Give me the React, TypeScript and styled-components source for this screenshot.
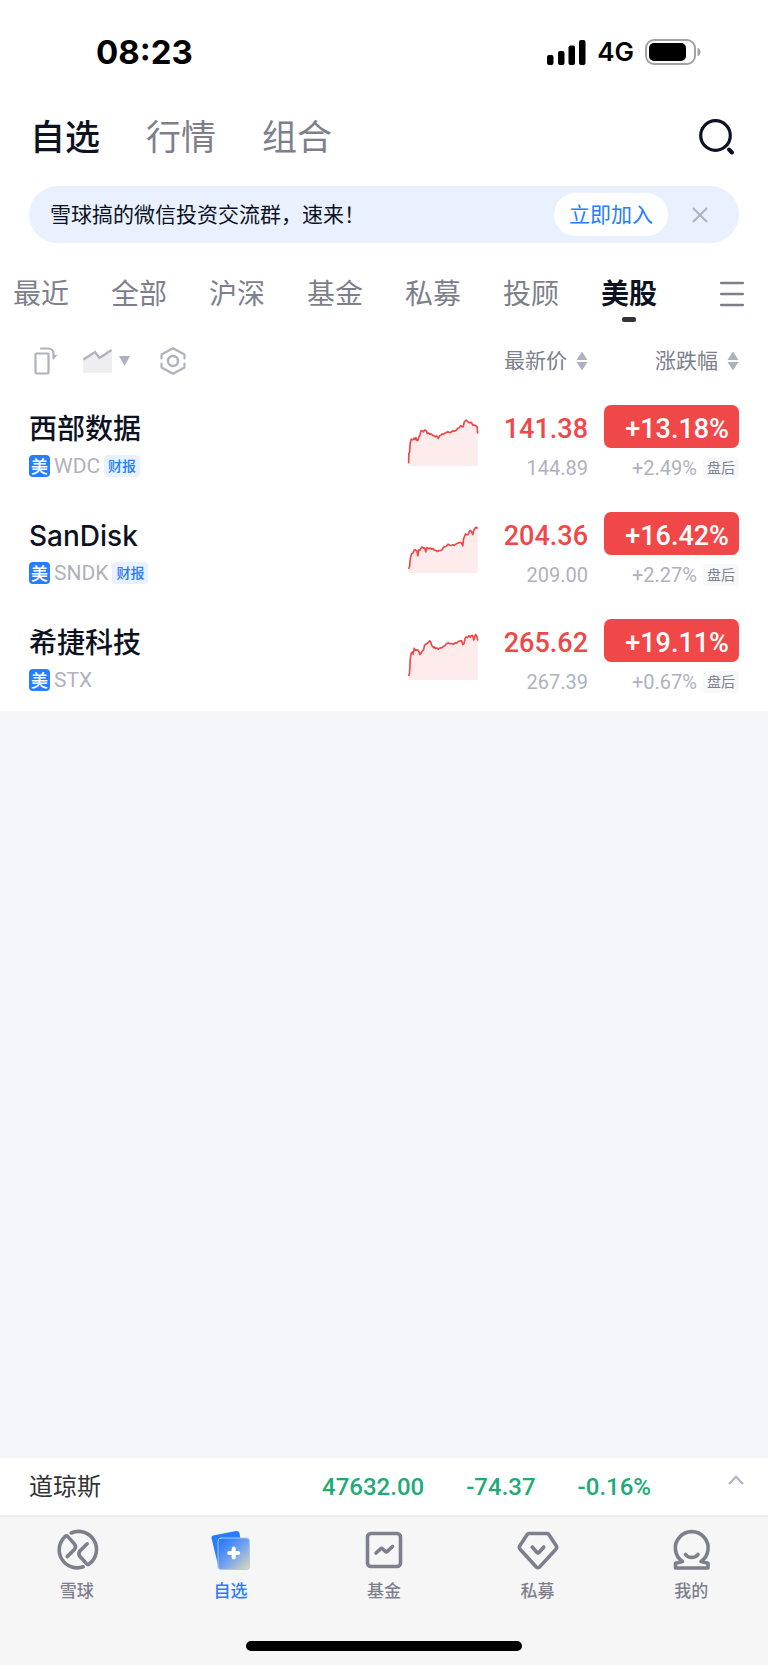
import React from 'react';
import styled, { createGlobalStyle } from 'styled-components';

const ink = '#0d1223';
const grey = '#7d808c';
const pale = '#afb1bf';
const red = '#f04848';
const green = '#1faa76';
const blue = '#267dff';
const numeric = `Roboto, "Noto Sans CJK SC", sans-serif`;

const GlobalStyle = createGlobalStyle`
  *, *::before, *::after { box-sizing: border-box; }
  body {
    margin: 0;
    background: #f3f5fa;
    color: ${ink};
    font-family: Inter, "Noto Sans CJK SC", sans-serif;
  }
  button {
    margin: 0;
    padding: 0;
    border: 0;
    background: none;
    color: inherit;
    font: inherit;
    cursor: pointer;
  }
  a { color: inherit; text-decoration: none; }
  svg { display: block; flex: none; overflow: visible; }
`;

const Page = styled.div`
  display: flex;
  flex-direction: column;
  min-height: 100vh;
`;

const TopPanel = styled.div`
  background: #fff;
`;

const StatusBar = styled.div`
  display: flex;
  align-items: center;
  justify-content: space-between;
  height: 104px;
  padding: 0 67px 0 96px;
  color: #000;
`;

const Clock = styled.span`
  font-size: 33px;
  font-weight: 700;
  line-height: 40px;
`;

const StatusIcons = styled.div`
  display: flex;
  align-items: center;
  gap: 11px;
  font-size: 26px;
  font-weight: 600;
  line-height: 32px;
`;

const Header = styled.header`
  display: flex;
  align-items: center;
  justify-content: space-between;
  height: 65px;
  padding: 0 33px 0 30px;
`;

const HeaderNav = styled.nav`
  display: flex;
  gap: 46px;
`;

const HeaderLink = styled.a<{ $active?: boolean }>`
  color: ${(p) => (p.$active ? ink : grey)};
  font-size: 35px;
  font-weight: ${(p) => (p.$active ? 500 : 400)};
  line-height: 48px;
`;

const Banner = styled.div`
  display: flex;
  align-items: center;
  height: 57px;
  margin: 17px 29px 0;
  padding: 0 31px 0 21px;
  border-radius: 29px;
  background: #e9f1fe;
  font-size: 21px;
  line-height: 30px;
`;

const BannerText = styled.p`
  flex: 1;
  margin: 0;
`;

const JoinButton = styled.button`
  height: 43px;
  margin-right: 24px;
  padding: 0 15px;
  border-radius: 22px;
  background: #fff;
  color: ${blue};
`;

const GroupBar = styled.div`
  display: flex;
  align-items: center;
  justify-content: space-between;
  padding: 24px 24px 11px 13px;
`;

const GroupTabs = styled.nav`
  display: flex;
  gap: 42px;
`;

const GroupTab = styled.a<{ $active?: boolean }>`
  position: relative;
  color: ${(p) => (p.$active ? ink : grey)};
  font-size: 28px;
  font-weight: ${(p) => (p.$active ? 700 : 400)};
  line-height: 54px;

  &::after {
    content: ${(p) => (p.$active ? '""' : 'none')};
    position: absolute;
    bottom: -1px;
    left: calc(50% - 7px);
    width: 14px;
    height: 5px;
    border-radius: 2px;
    background: #333;
  }
`;

const QuoteTable = styled.table`
  width: 100%;
  border-collapse: collapse;
  table-layout: fixed;
`;

const HeadCell = styled.th<{ $width?: number; $end?: number }>`
  width: ${(p) => (p.$width ? `${p.$width}px` : 'auto')};
  height: 58px;
  padding: 0 ${(p) => p.$end || 0}px 0 0;
  color: ${grey};
  font-size: 21px;
  font-weight: 400;
`;

const Tools = styled.div`
  display: flex;
  align-items: center;
  padding-left: 33px;
`;

const ToolButton = styled.button<{ $gap?: number }>`
  display: flex;
  align-items: center;
  gap: 7px;
  margin-right: ${(p) => p.$gap || 0}px;
`;

const SortButton = styled.button`
  display: flex;
  align-items: center;
  gap: 9px;
  margin-left: auto;
  line-height: 28px;
  white-space: nowrap;
`;

const Cell = styled.td<{ $end?: number }>`
  height: 107px;
  padding: 15px ${(p) => p.$end || 0}px 0 0;
  vertical-align: top;
`;

const Stock = styled.a`
  display: block;
  padding-left: 29px;
`;

const StockName = styled.span`
  display: block;
  font-size: 28px;
  font-weight: 500;
  line-height: 48px;
`;

const StockMeta = styled.span`
  display: flex;
  align-items: center;
  gap: 4px;
  height: 22px;
  margin-top: 2px;
`;

const Tag = styled.span<{ $kind: 'market' | 'report' | 'session' }>`
  flex: none;
  height: 22px;
  padding: 0 ${(p) => (p.$kind === 'market' ? 2 : 4)}px;
  border-radius: 4px;
  background: ${(p) =>
    ({ market: blue, report: '#e9f1fe', session: '#f7f8fa' })[p.$kind]};
  color: ${(p) => ({ market: '#fff', report: blue, session: grey })[p.$kind]};
  font-family: "Noto Sans CJK SC", sans-serif;
  font-size: ${(p) => (p.$kind === 'market' ? 17 : 14)}px;
  font-weight: ${(p) => (p.$kind === 'session' ? 400 : 500)};
  line-height: 21px;
`;

const Ticker = styled.span`
  color: ${pale};
  font-family: ${numeric};
  font-size: 21px;
  line-height: 22px;
`;

const Price = styled.div`
  color: ${red};
  font-family: ${numeric};
  font-size: 27px;
  font-weight: 500;
  line-height: 48px;
  text-align: right;
`;

const Change = styled.div`
  height: 43px;
  margin-left: 16px;
  padding-right: 10px;
  border-radius: 7px;
  background: ${red};
  color: #fff;
  font-family: ${numeric};
  font-size: 27px;
  font-weight: 500;
  line-height: 48px;
  text-align: right;
`;

const AfterHours = styled.div<{ $top: number }>`
  display: flex;
  align-items: center;
  justify-content: flex-end;
  gap: 6px;
  margin-top: ${(p) => p.$top}px;
  color: ${pale};
  font-family: ${numeric};
  font-size: 20px;
  line-height: 22px;
`;

const ChartBox = styled.div`
  padding: 14px 0 0 1px;
`;

const Spacer = styled.div`
  flex: 1;
`;

const IndexBar = styled.div`
  display: flex;
  align-items: center;
  height: 59px;
  padding: 0 24px 0 29px;
  border-bottom: 2px solid #ececf3;
  background: #fff;
  font-size: 24px;
  line-height: 34px;
`;

const IndexName = styled.span`
  flex: 1;
  color: #333;
`;

const IndexValues = styled.div`
  display: flex;
  gap: 42px;
  margin-right: 77px;
  color: ${green};
  font-family: ${numeric};
  font-weight: 500;
`;

const ExpandButton = styled.button`
  margin-bottom: 14px;
`;

const TabBar = styled.nav`
  display: grid;
  grid-template-columns: repeat(5, 1fr);
  padding-top: 12px;
  background: #f6f6f6;
`;

const TabItem = styled.a<{ $active?: boolean }>`
  display: flex;
  flex-direction: column;
  align-items: center;
  gap: 7px;
  color: ${(p) => (p.$active ? blue : grey)};
  font-size: 17px;
  font-weight: 500;
  line-height: 26px;
`;

const HomeArea = styled.div`
  display: flex;
  justify-content: center;
  padding: 37px 0 14px;
  background: #f6f6f6;
`;

const HomeBar = styled.div`
  width: 36%;
  height: 10px;
  border-radius: 5px;
  background: #000;
`;

type StockRow = {
  name: string;
  ticker: string;
  report?: boolean;
  price: string;
  change: string;
  afterPrice: string;
  afterChange: string;
  trend: string;
};

const stocks: StockRow[] = [
  {
    name: '西部数据',
    ticker: 'WDC',
    report: true,
    price: '141.38',
    change: '+13.18%',
    afterPrice: '144.89',
    afterChange: '+2.49%',
    trend:
      '55,220 56,190 58,186 60,158 63,147 68,149 71,144 74,148 77,142 80,151 83,150 87,138 89,136 92,123 96,121 100,125 104,119 109,122 111,130 116,128 119,132 124,131 128,136 132,136 135,140 140,137 145,145 149,136 153,135 156,131 160,132 166,128 172,125 182,127 188,122 193,123 200,119 203,114 207,113 213,106 217,110 220,109 223,96 229,89 233,93 237,97 245,96 249,105 254,104 259,107 262,110 264,130',
  },
  {
    name: 'SanDisk',
    ticker: 'SNDK',
    report: true,
    price: '204.36',
    change: '+16.42%',
    afterPrice: '209.00',
    afterChange: '+2.27%',
    trend:
      '55,216 58,209 60,186 64,170 68,168 72,159 76,158 80,161 83,176 86,158 90,158 95,149 100,153 103,152 107,164 110,151 115,154 120,153 124,156 129,154 133,159 138,160 142,163 147,160 152,160 156,158 160,151 165,149 170,146 174,141 180,144 184,145 189,143 193,144 199,140 205,137 210,136 215,137 219,146 221,125 224,118 227,110 231,113 236,110 239,101 243,100 246,106 249,112 252,99 255,93 260,90 264,93',
  },
  {
    name: '希捷科技',
    ticker: 'STX',
    price: '265.62',
    change: '+19.11%',
    afterPrice: '267.39',
    afterChange: '+0.67%',
    trend:
      '55,216 58,207 60,165 63,147 67,143 69,150 72,132 75,138 80,137 85,139 89,151 93,146 96,141 100,138 103,124 108,119 113,116 119,110 122,113 125,124 130,130 133,128 136,133 140,131 145,135 150,131 155,131 160,127 165,124 170,118 175,116 180,118 185,118 190,120 195,116 200,117 205,112 210,110 215,109 219,121 222,119 226,102 229,98 233,100 237,94 241,99 244,94 249,94 252,107 257,91 261,95 264,109',
  },
];

const Sparkline = ({ points }: { points: string }) => (
  <svg width="70" height="47" viewBox="54 86 210 142" aria-hidden="true">
    <polygon points={`55,228 ${points} 264,228`} fill="#feeced" />
    <polyline
      points={points}
      fill="none"
      stroke={red}
      strokeWidth="5"
      strokeLinejoin="round"
    />
  </svg>
);

const SortIcon = () => (
  <svg width="12" height="20" viewBox="0 0 12 20" fill={pale} aria-hidden="true">
    <path d="M6 0.500 11.500 9H0.500zM6 19.500 0.500 11H11.500z" />
  </svg>
);

const SignalIcon = () => (
  <svg width="39" height="25" viewBox="0 0 39 25" aria-hidden="true">
    <rect x="0" y="15" width="6.500" height="10" rx="2" />
    <rect x="11" y="11" width="6.500" height="14" rx="2" />
    <rect x="21.500" y="5.500" width="6.500" height="19.500" rx="2" />
    <rect x="32" y="0" width="6.500" height="25" rx="2" />
  </svg>
);

const BatteryIcon = () => (
  <svg width="56" height="26" viewBox="0 0 56 26" aria-hidden="true">
    <rect x="1" y="1" width="49" height="24" rx="8" fill="none" stroke="#a2a2a2" strokeWidth="2" />
    <rect x="4" y="4" width="37" height="18" rx="5" />
    <path d="M52.500 9c4 1 4 7 0 8z" fill="#a2a2a2" />
  </svg>
);

const SearchIcon = () => (
  <svg width="36" height="36" viewBox="0 0 36 36" fill="none" stroke={ink} strokeWidth="3.200">
    <circle cx="16.500" cy="16.500" r="14.800" />
    <path d="M30 30.500 33 33.500" strokeWidth="4" strokeLinecap="round" />
  </svg>
);

const CloseIcon = () => (
  <svg width="16" height="16" viewBox="0 0 16 16" fill="none" stroke={pale} strokeWidth="2">
    <path d="M1 1 15 15M15 1 1 15" />
  </svg>
);

const MenuIcon = () => (
  <svg width="24" height="26" viewBox="0 0 24 26" fill="none" stroke={grey} strokeWidth="2.500" strokeLinecap="round">
    <path d="M1.200 2H22.800M1.200 13H22.800M1.200 24H22.800" />
  </svg>
);

const RotateIcon = () => (
  <svg width="24" height="28" viewBox="0 0 24 28" fill="none" stroke={pale} strokeWidth="2.200" strokeLinejoin="round">
    <rect x="2.500" y="6.500" width="13" height="20" rx="1" />
    <path d="M8 1.500H15Q20.500 1.500 20.500 7V11" strokeLinecap="round" />
    <path d="M20 8H24.500L20 13z" fill={pale} stroke="none" />
  </svg>
);

const TrendIcon = () => (
  <svg width="29" height="24" viewBox="0 0 29 24" aria-hidden="true">
    <path d="M0 10.500 12 3 17 9 29 1V24H0z" fill="#eeeef1" />
    <path d="M0.500 10.500 12 3 16.500 9 28.500 1" fill="none" stroke={pale} strokeWidth="2.200" />
  </svg>
);

const CaretIcon = () => (
  <svg width="11" height="10" viewBox="0 0 11 10" fill={pale} aria-hidden="true">
    <path d="M0 0H11L5.500 10z" />
  </svg>
);

const SettingsIcon = () => (
  <svg width="26" height="28" viewBox="0 0 26 28" fill="none" stroke={pale} strokeWidth="2.200" strokeLinejoin="round" strokeLinecap="round">
    <path d="M1.500 11.500V8Q1.500 7.500 2 7.200L13 1.200 24 7.200Q24.500 7.500 24.500 8V11.500" />
    <path d="M1.500 16.500V20Q1.500 20.500 2 20.800L13 26.800 24 20.800Q24.500 20.500 24.500 20V16.500" />
    <circle cx="13" cy="14" r="5" strokeWidth="2.500" />
  </svg>
);

const ChevronUpIcon = () => (
  <svg width="16" height="10" viewBox="0 0 16 10" fill="none" stroke={pale} strokeWidth="2">
    <path d="M1 9 8 1.800 15 9" />
  </svg>
);

const iconFrame = {
  width: 42,
  height: 42,
  viewBox: '0 0 42 42',
  fill: 'none',
  stroke: grey,
  strokeWidth: 3.6,
  strokeLinejoin: 'round' as const,
  strokeLinecap: 'round' as const,
  'aria-hidden': true,
};

const SnowballIcon = () => (
  <svg {...iconFrame}>
    <path d="M15.200 4A18 18 0 0 1 33.500 34.700Q32.200 36.400 30.600 34.800L24.200 27.800Q21.800 24.900 23.800 22.100L31.200 14.800" />
    <path d="M27.200 37.800A18 18 0 0 1 8.900 7.700Q10.200 6 11.800 7.600L18.200 14.600Q20.600 17.500 18.600 20.300L11.200 27.600" />
  </svg>
);

const WatchlistIcon = () => (
  <svg {...iconFrame} stroke="none">
    <defs>
      <linearGradient id="card" x1="9" y1="9" x2="40" y2="40" gradientUnits="userSpaceOnUse">
        <stop offset="0.120" stopColor="#2b7dfb" />
        <stop offset="0.550" stopColor="#76a5ef" />
        <stop offset="0.980" stopColor="#dcd3b6" />
      </linearGradient>
    </defs>
    <path d="M4 6.500 27 2Q30 1.500 30.500 4L35 31 9 36 2.500 9Q2 7 4 6.500z" fill={blue} />
    <rect x="9" y="9" width="31.500" height="31.500" rx="3" fill="url(#card)" stroke="#a9c8f7" strokeWidth="1" />
    <path d="M24.700 19.500V28.500M20.200 24H29.200" stroke="#fff" strokeWidth="4" />
  </svg>
);

const FundIcon = () => (
  <svg {...iconFrame}>
    <rect x="4.500" y="4.500" width="33" height="33" rx="3.500" />
    <path d="M13 24 17.600 19.800Q18.600 18.900 19.600 19.800L22.300 22.400Q23.300 23.300 24.300 22.400L29.500 17.500" />
  </svg>
);

const DiamondIcon = () => (
  <svg {...iconFrame} viewBox="0.500 0.500 42 42">
    <path d="M12.500 5H30.500Q31.700 5 32.300 6L39.700 17.200Q40.800 19 39.400 20.700L23.200 38.400Q21.500 40.200 19.800 38.400L3.600 20.700Q2.200 19 3.300 17.200L10.700 6Q11.300 5 12.500 5z" />
    <path d="M15.800 18.500 20.500 24Q21.500 25 22.500 24L27.300 18.500" />
  </svg>
);

const ProfileIcon = () => (
  <svg {...iconFrame}>
    <path d="M12.500 32.600A16.400 16.400 0 1 1 31 32.600L38 34.200V39H5.500V34.200z" />
    <path d="M15.500 25.500C18.500 29.500 25 29.500 28 25.500" />
  </svg>
);

const tabs = [
  { label: '雪球', Icon: SnowballIcon },
  { label: '自选', Icon: WatchlistIcon, active: true },
  { label: '基金', Icon: FundIcon },
  { label: '私募', Icon: DiamondIcon },
  { label: '我的', Icon: ProfileIcon },
];

const groups = ['最近', '全部', '沪深', '基金', '私募', '投顾', '美股'];

export default function App() {
  return (
    <Page lang="zh-CN">
      <GlobalStyle />
      <TopPanel>
        <StatusBar>
          <Clock>08:23</Clock>
          <StatusIcons>
            <SignalIcon />
            <span>4G</span>
            <BatteryIcon />
          </StatusIcons>
        </StatusBar>

        <Header>
          <HeaderNav>
            <HeaderLink href="#watchlist" $active>自选</HeaderLink>
            <HeaderLink href="#market">行情</HeaderLink>
            <HeaderLink href="#portfolio">组合</HeaderLink>
          </HeaderNav>
          <button type="button" aria-label="搜索"><SearchIcon /></button>
        </Header>

        <Banner>
          <BannerText>雪球搞的微信投资交流群，速来！</BannerText>
          <JoinButton type="button">立即加入</JoinButton>
          <ToolButton type="button" aria-label="关闭"><CloseIcon /></ToolButton>
        </Banner>

        <GroupBar>
          <GroupTabs>
            {groups.map((group) => (
              <GroupTab key={group} href={`#${group}`} $active={group === '美股'}>
                {group}
              </GroupTab>
            ))}
          </GroupTabs>
          <button type="button" aria-label="分组"><MenuIcon /></button>
        </GroupBar>

        <QuoteTable>
          <thead>
            <tr>
              <HeadCell>
                <Tools>
                  <ToolButton type="button" aria-label="横屏" $gap={26}><RotateIcon /></ToolButton>
                  <ToolButton type="button" aria-label="走势" $gap={30}><TrendIcon /><CaretIcon /></ToolButton>
                  <ToolButton type="button" aria-label="设置"><SettingsIcon /></ToolButton>
                </Tools>
              </HeadCell>
              <HeadCell $width={71} aria-label="走势图" />
              <HeadCell $width={110}>
                <SortButton type="button">最新价<SortIcon /></SortButton>
              </HeadCell>
              <HeadCell $width={180} $end={29}>
                <SortButton type="button">涨跌幅<SortIcon /></SortButton>
              </HeadCell>
            </tr>
          </thead>
          <tbody>
            {stocks.map((stock) => (
              <tr key={stock.ticker}>
                <Cell>
                  <Stock href={`#${stock.ticker}`}>
                    <StockName>{stock.name}</StockName>
                    <StockMeta>
                      <Tag $kind="market">美</Tag>
                      <Ticker>{stock.ticker}</Ticker>
                      {stock.report && <Tag $kind="report">财报</Tag>}
                    </StockMeta>
                  </Stock>
                </Cell>
                <Cell>
                  <ChartBox><Sparkline points={stock.trend} /></ChartBox>
                </Cell>
                <Cell>
                  <Price>{stock.price}</Price>
                  <AfterHours $top={4}>{stock.afterPrice}</AfterHours>
                </Cell>
                <Cell $end={29}>
                  <Change>{stock.change}</Change>
                  <AfterHours $top={9}>
                    {stock.afterChange}
                    <Tag $kind="session">盘后</Tag>
                  </AfterHours>
                </Cell>
              </tr>
            ))}
          </tbody>
        </QuoteTable>
      </TopPanel>

      <Spacer />

      <IndexBar>
        <IndexName>道琼斯</IndexName>
        <IndexValues>
          <span>47632.00</span>
          <span>-74.37</span>
          <span>-0.16%</span>
        </IndexValues>
        <ExpandButton type="button" aria-label="展开"><ChevronUpIcon /></ExpandButton>
      </IndexBar>

      <TabBar>
        {tabs.map(({ label, Icon, active }) => (
          <TabItem key={label} href={`#${label}`} $active={active}>
            <Icon />
            {label}
          </TabItem>
        ))}
      </TabBar>
      <HomeArea><HomeBar /></HomeArea>
    </Page>
  );
}
